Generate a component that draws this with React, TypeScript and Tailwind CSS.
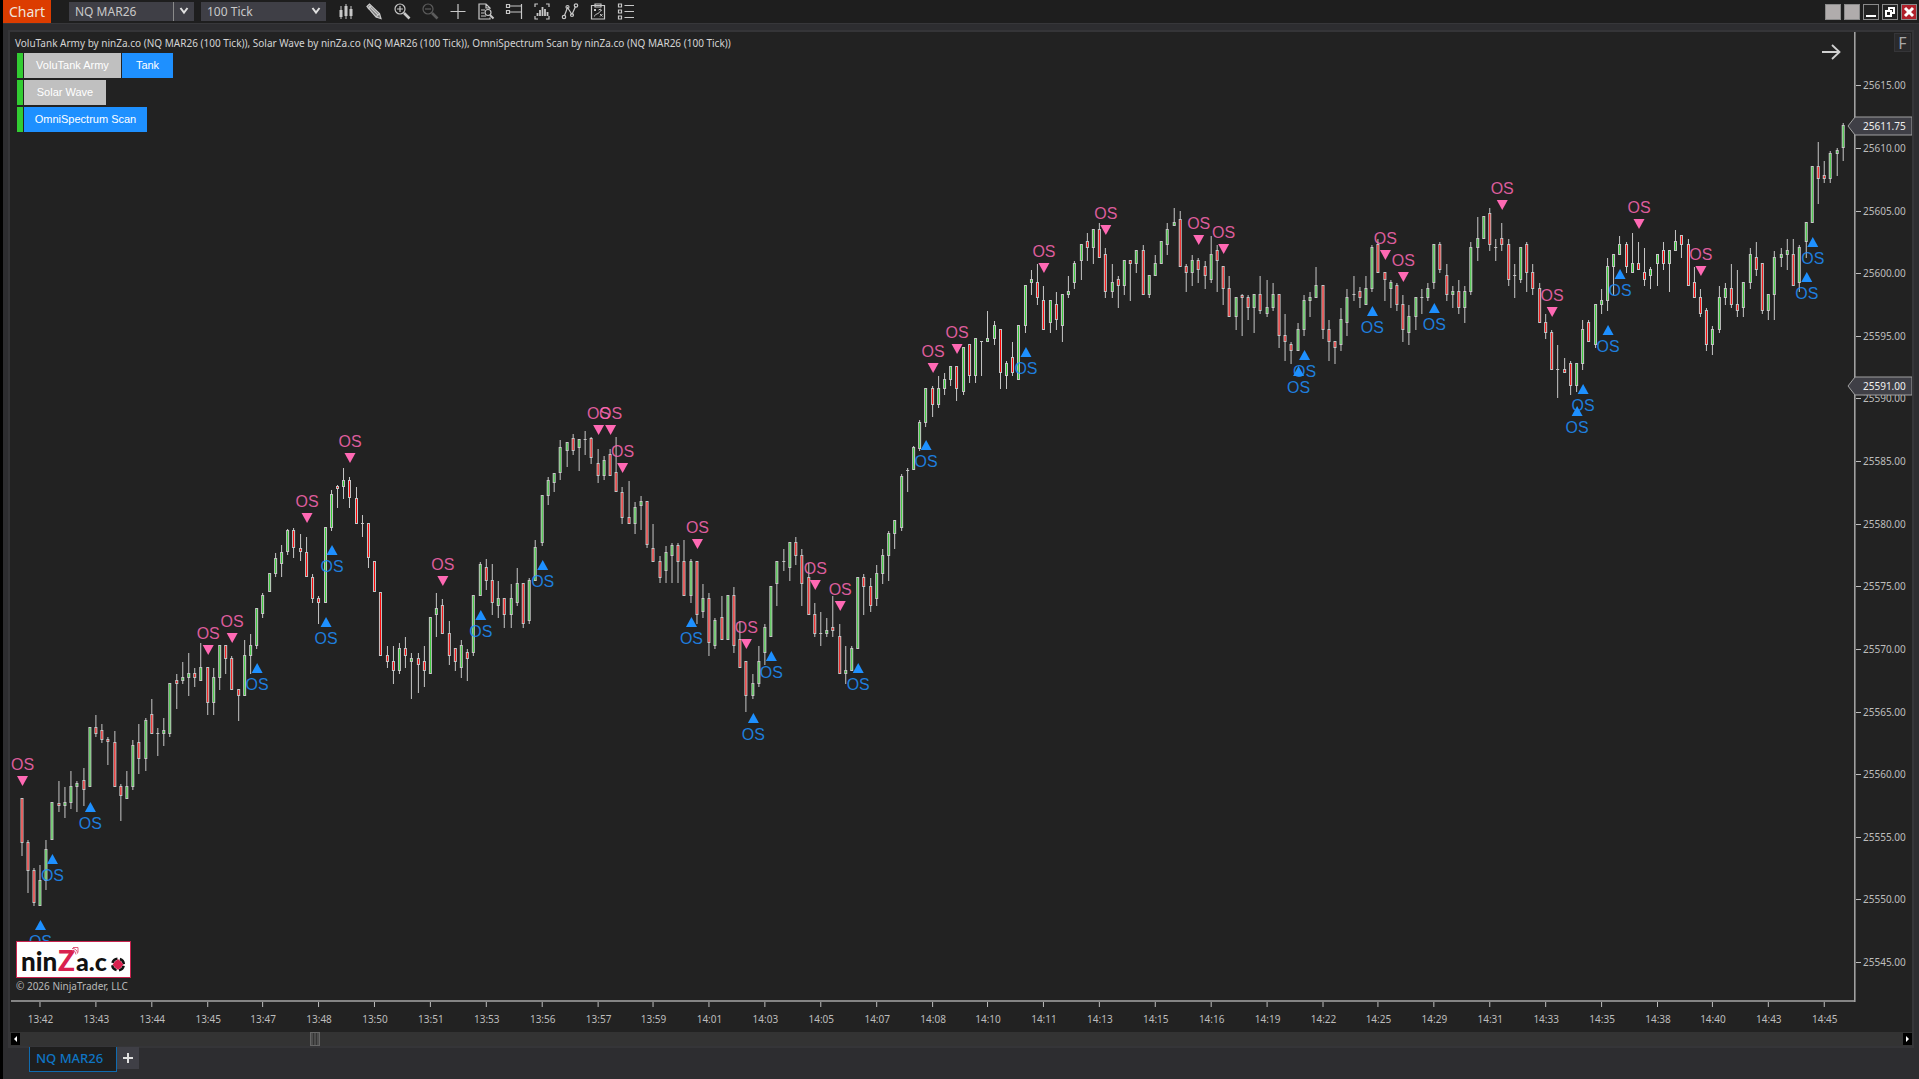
import { useState } from 'react'
import type { ReactNode } from 'react'

type Bar = [number, number, number, number]

// Bars are [high, body top, body bottom, low] in thirds of a pixel below `top`.
// A negative high marks a falling bar.
const segments: { top: number; bars: Bar[] }[] = [
  {
    top: 560,
    bars: [
      [-715, 715, 849, 887], [-841, 847, 933, 999], [-925, 931, 1029, 1038], [916, 961, 1038, 1038], [841, 868, 963, 991],
      [727, 727, 839, 839], [-663, 729, 738, 755], [682, 727, 738, 773], [633, 679, 728, 746], [664, 670, 680, 755],
      [-625, 661, 689, 738], [502, 502, 681, 681], [-465, 502, 521, 530], [-492, 511, 539, 548], [-532, 538, 547, 614],
      [-514, 547, 681, 681], [-673, 679, 707, 782], [633, 679, 716, 716], [541, 555, 681, 690], [-492, 547, 597, 641],
      [475, 481, 597, 632], [-417, 462, 521, 521], [-505, 519, 522, 587], [475, 511, 521, 557], [369, 369, 521, 530],
      [-342, 361, 371, 446], [306, 352, 362, 371], [279, 340, 353, 407], [-325, 340, 353, 380], [249, 322, 362, 362],
      [-322, 322, 429, 464], [325, 352, 429, 464], [255, 255, 353, 390], [-255, 255, 297, 341], [-288, 294, 389, 389],
      [-388, 388, 407, 482], [240, 286, 407, 407], [222, 256, 288, 341], [144, 144, 258, 267], [99, 105, 163, 173],
      [39, 39, 97, 97],
    ],
  },
  {
    top: 420,
    bars: [
      [399, 414, 461, 472], [376, 396, 433, 472], [328, 329, 397, 406], [-323, 330, 385, 415], [-341, 384, 397, 424],
      [-350, 395, 472, 472], [-462, 471, 536, 548], [-527, 534, 548, 611], [320, 320, 548, 548], [209, 223, 323, 332],
      [-196, 197, 208, 265], [143, 179, 200, 236], [-170, 179, 235, 265], [-200, 233, 311, 311], [-284, 309, 312, 350],
      [-308, 308, 415, 443], [-423, 423, 517, 517], [-516, 516, 707, 707], [-677, 704, 725, 743], [-678, 723, 752, 791],
      [669, 684, 752, 762], [-651, 684, 707, 743], [699, 713, 725, 836], [-699, 714, 735, 818], [-678, 723, 752, 800],
      [591, 591, 762, 762], [518, 563, 584, 650], [-537, 555, 641, 641], [-602, 639, 707, 734], [-684, 684, 725, 753],
      [660, 675, 743, 773], [-687, 695, 716, 782], [524, 524, 698, 707], [426, 431, 527, 527], [-416, 440, 482, 509],
      [-433, 479, 548, 584], [482, 534, 557, 593], [-534, 534, 584, 623], [491, 534, 584, 623], [443, 489, 548, 557],
      [-489, 489, 611, 623], [473, 479, 602, 611], [359, 382, 482, 482], [224, 224, 368, 377], [170, 179, 227, 256],
      [158, 158, 190, 216], [59, 82, 160, 181], [65, 66, 94, 142], [-41, 55, 94, 106], [56, 56, 85, 152],
      [-32, 57, 60, 106], [-50, 55, 115, 132], [-86, 130, 169, 190], [107, 121, 169, 181], [-86, 103, 169, 169],
      [-50, 157, 217, 217],
    ],
  },
  {
    top: 390,
    bars: [
      [-290, 305, 383, 401], [-272, 380, 401, 401], [335, 352, 401, 431], [317, 332, 347, 421], [-332, 332, 466, 475],
      [-401, 474, 515, 515], [-498, 513, 563, 580], [467, 486, 542, 580], [459, 464, 497, 580], [-459, 464, 515, 580],
      [-450, 513, 617, 617], [507, 513, 617, 638], [-513, 513, 674, 701], [581, 624, 665, 683], [-608, 624, 758, 797],
      [684, 690, 767, 776], [-618, 682, 749, 749], [615, 615, 749, 749], [-591, 615, 767, 788], [-693, 747, 833, 833],
      [-813, 813, 917, 965], [852, 879, 917, 926], [768, 813, 881, 890], [702, 711, 788, 824], [588, 588, 740, 740],
      [513, 513, 581, 647], [-476, 513, 516, 542], [455, 455, 533, 572], [-440, 456, 497, 524], [-476, 494, 581, 647],
      [-518, 561, 674, 674], [-639, 672, 732, 740], [-666, 730, 733, 767], [684, 720, 732, 740], [-618, 711, 722, 740],
      [-702, 738, 851, 851], [768, 840, 851, 881], [768, 773, 842, 842], [560, 560, 776, 776], [-552, 560, 590, 674],
      [-563, 588, 647, 665], [524, 549, 627, 647], [476, 494, 551, 581], [422, 428, 497, 572], [389, 389, 431, 476],
      [251, 257, 413, 422], [-234, 239, 242, 307], [167, 172, 241, 241],
    ],
  },
  {
    top: 200,
    bars: [
      [661, 667, 746, 752], [565, 565, 670, 680], [-559, 565, 615, 652], [528, 565, 615, 625], [520, 538, 568, 586],
      [499, 499, 541, 559], [-499, 499, 568, 604], [442, 442, 577, 586], [-433, 433, 528, 550], [415, 415, 528, 550],
      [-424, 424, 427, 529], [334, 415, 426, 426], [362, 376, 416, 435], [-388, 388, 519, 568], [484, 489, 528, 568],
      [-427, 472, 519, 529], [376, 376, 541, 541], [256, 256, 378, 400], [210, 238, 248, 285], [-193, 247, 294, 315],
      [-259, 301, 389, 389], [300, 301, 369, 400], [-277, 313, 360, 390], [283, 283, 378, 427], [229, 274, 285, 294],
      [184, 190, 249, 267], [133, 133, 182, 240], [-99, 124, 143, 182], [88, 88, 143, 192], [-69, 88, 173, 173],
      [-144, 163, 276, 294], [193, 247, 276, 294], [-229, 238, 258, 324], [181, 181, 258, 285], [-181, 181, 192, 303],
      [151, 151, 192, 219], [-136, 151, 285, 285], [226, 226, 285, 294], [166, 190, 228, 228], [124, 124, 192, 192],
      [70, 88, 135, 165], [25, 67, 77, 77], [-34, 58, 201, 201], [-193, 199, 219, 276], [166, 181, 219, 258],
    ],
  },
  {
    top: 190,
    bars: [
      [-205, 211, 240, 279], [-214, 229, 258, 297], [139, 193, 270, 279], [-166, 181, 213, 306], [-229, 229, 297, 346],
      [-259, 295, 381, 381], [322, 322, 381, 420], [-313, 314, 323, 438], [-316, 322, 353, 390], [313, 313, 353, 430],
      [-259, 313, 363, 372], [271, 352, 372, 381], [280, 313, 354, 363], [-313, 313, 438, 474], [-373, 436, 457, 514],
      [-457, 462, 483, 522], [400, 418, 483, 483], [316, 331, 420, 438], [307, 322, 332, 381], [232, 286, 324, 324],
      [-286, 286, 420, 447], [-391, 418, 456, 514], [-454, 454, 474, 522], [355, 388, 465, 483], [298, 322, 399, 438],
      [-259, 313, 316, 333], [-290, 303, 323, 354], [259, 295, 346, 346], [166, 172, 297, 306], [-148, 163, 249, 249],
      [-247, 247, 270, 333], [271, 277, 297, 354], [-280, 286, 346, 363], [-316, 343, 420, 456], [346, 379, 430, 465],
      [322, 322, 381, 420], [-298, 322, 325, 372], [280, 295, 324, 333], [163, 163, 279, 297], [-157, 163, 240, 249],
      [-223, 256, 315, 333], [289, 304, 315, 354], [-271, 304, 354, 372], [289, 304, 354, 399], [157, 172, 306, 315],
      [82, 145, 173, 213], [79, 79, 147, 147], [-55, 70, 165, 182], [-148, 172, 175, 213], [-100, 145, 165, 182],
      [-148, 163, 270, 288], [-222, 256, 259, 324],
    ],
  },
  {
    top: 0,
    bars: [
      [741, 741, 839, 849], [-727, 733, 819, 876], [-793, 817, 867, 885], [-849, 865, 969, 969], [-943, 967, 999, 1017],
      [-991, 997, 1110, 1110], [-1036, 1107, 1110, 1194], [-1075, 1108, 1119, 1119], [-1084, 1090, 1158, 1185], [1090, 1090, 1158, 1176],
      [961, 988, 1092, 1110], [-961, 967, 1026, 1026], [913, 913, 1035, 1044], [868, 901, 914, 942], [774, 799, 903, 933],
      [763, 763, 801, 886], [709, 732, 765, 765], [-727, 733, 801, 819], [699, 790, 818, 818], [-727, 790, 810, 810],
      [-745, 817, 840, 858], [802, 808, 828, 867], [763, 763, 792, 858], [-727, 751, 792, 810], [751, 751, 792, 876],
      [690, 724, 752, 752], [-706, 706, 735, 774], [-717, 732, 858, 858], [-801, 847, 894, 894], [-867, 892, 942, 951],
      [-925, 930, 1035, 1053], [979, 988, 1035, 1065], [858, 892, 990, 999], [850, 865, 893, 915], [-793, 865, 915, 924],
      [-810, 913, 933, 951], [847, 847, 924, 951], [745, 763, 849, 867], [-727, 771, 809, 828], [-790, 790, 933, 942],
      [883, 883, 933, 960], [754, 771, 885, 960], [745, 763, 774, 801], [717, 751, 764, 810], [-717, 763, 858, 858],
      [736, 741, 849, 876], [667, 667, 726, 774], [499, 499, 668, 668], [-427, 498, 536, 612], [-483, 525, 536, 548],
      [454, 460, 536, 548], [444, 450, 461, 528], [370, 375, 443, 483],
    ],
  },
]

// [bar index, y of the triangle's upper edge]
const sellSignals = [
  [0, 776], [30, 645], [34, 633], [46, 513], [53, 453], [68, 576], [93, 425], [95, 425], [97, 463], [109, 539],
  [117, 639], [128, 580], [132, 601], [147, 363], [151, 344], [165, 263], [175, 225], [190, 235], [194, 244],
  [220, 250], [223, 272], [239, 200], [247, 307], [261, 219], [271, 266],
]
const buySignals = [
  [3, 920], [5, 854], [11, 802], [38, 663], [49, 617], [50, 545], [74, 610], [84, 560], [108, 617], [118, 713],
  [121, 651], [135, 663], [146, 440], [162, 347], [206, 366], [207, 350], [218, 306], [228, 303], [251, 406],
  [252, 384], [256, 325], [258, 269], [288, 272], [289, 237],
]

const times = [
  '13:42', '13:43', '13:44', '13:45', '13:47', '13:48', '13:50', '13:51', '13:53', '13:56', '13:57',
  '13:59', '14:01', '14:03', '14:05', '14:07', '14:08', '14:10', '14:11', '14:13', '14:15', '14:16',
  '14:19', '14:22', '14:25', '14:29', '14:31', '14:33', '14:35', '14:38', '14:40', '14:43', '14:45',
]

const barX = (i: number) => Math.max(Math.floor(20.97 + 6.205 * i), 21) * 0.99847 + 0.535

const priceY = (price: number) => 85.3 + (25615 - price) * 12.526

const candles = segments.flatMap(({ top, bars }) =>
  bars.map(([high, open, close, low]) => ({
    up: high > 0,
    high: top + Math.round(Math.abs(high) / 3),
    top: top + Math.round(open / 3),
    bottom: top + Math.round(close / 3),
    low: top + Math.round(low / 3),
  })),
)

function Candles() {
  return (
    <g>
      {candles.map((c, i) => {
        const x = barX(i)
        const height = Math.max(c.bottom - c.top, 1)
        return (
          <g key={i}>
            <rect x={x} y={c.high} width={1} height={Math.max(c.low - c.high, 1)} fill="#c6c6c6" />
            <rect x={x - 1} y={c.top} width={3} height={height} fill="#c6c6c6" />
            {height > 2 && (
              <rect x={x} y={c.top + 1} width={1} height={height - 2} fill={c.up ? '#32cd32' : '#ff0000'} />
            )}
          </g>
        )
      })}
    </g>
  )
}

function Signals() {
  return (
    <g fontFamily="'Liberation Sans', sans-serif" fontSize={16} textAnchor="middle">
      {sellSignals.map(([i, y]) => {
        const x = barX(i) + 1
        return (
          <g key={i} fill="#ff69b4">
            <path d={`M${x - 5.500} ${y}h11l-5.500 10z`} />
            <text x={x} y={y - 6} fillOpacity={0.85}>OS</text>
          </g>
        )
      })}
      {buySignals.map(([i, y]) => {
        const x = barX(i) + 1
        return (
          <g key={i} fill="#1e90ff">
            <path d={`M${x - 5.500} ${y + 10}h11l-5.500 -10z`} />
            <text x={x} y={y + 27} fillOpacity={0.85}>OS</text>
          </g>
        )
      })}
    </g>
  )
}

function PriceTag({ price }: { price: number }) {
  const y = Math.round(priceY(price))
  return (
    <g>
      <path d={`M1848 ${y}l7 -9h57v18h-57z`} fill="#3f3f46" stroke="#a0a0a0" />
      <text x={1863} y={y + 4} fill="#f0f0f0">{price.toFixed(2)}</text>
    </g>
  )
}

function PriceChart() {
  const prices = Array.from({ length: 15 }, (_, i) => 25615 - i * 5)
  return (
    <svg
      viewBox="10 32 1902 1000"
      className="block h-auto w-full"
      fontFamily="'Noto Sans', sans-serif"
      fontSize={10}
      role="img"
      aria-label="NQ MAR26 100 tick chart"
    >
      <Candles />
      <Signals />
      <rect x={11} y={1000} width={1845} height={2} fill="#858585" />
      <rect x={1854} y={31} width={1} height={971} fill="#a0a0a0" />
      <rect x={1855} y={31} width={1} height={971} fill="#6c6c6c" />
      {times.map((time, i) => {
        const x = barX(3 + i * 9)
        return (
          <g key={time} fill="#bdbdbd">
            <rect x={x} y={1002} width={1} height={5} />
            <text x={x + 1} y={1023} textAnchor="middle">{time}</text>
          </g>
        )
      })}
      {prices.map((price) => {
        const y = Math.round(priceY(price))
        return (
          <g key={price} fill="#bdbdbd">
            <rect x={1856} y={y} width={5} height={1} />
            <text x={1863} y={y + 4}>{price.toFixed(2)}</text>
          </g>
        )
      })}
      <PriceTag price={25611.75} />
      <PriceTag price={25591} />
      <path d="M1822 52h17M1832 45l7.500 7l-7.500 7" fill="none" stroke="#d0d0d0" strokeWidth={1.8} />
    </svg>
  )
}

const icons: { name: string; dim?: boolean; art: ReactNode }[] = [
  {
    name: 'Chart style',
    art: (
      <>
        <path d="M4 4v13M9 2v15M14 4v13" strokeWidth={1} />
        <path d="M4 8v7M9 4v10M14 7v7" strokeWidth={3} />
      </>
    ),
  },
  {
    name: 'Drawing tools',
    art: (
      <>
        <path d="M2 4.500L4.500 2L14.500 11.500L16 16.500L11 15Z" fill="#777" />
        <path d="M4 4l9 9M3 7L6 4M11 15L14.500 11.500" />
      </>
    ),
  },
  {
    name: 'Zoom in',
    art: (
      <>
        <circle cx={7} cy={7} r={5} />
        <path d="M4 7h6M7 4v6" />
        <path d="M11 11l5.500 5.500" strokeWidth={2.6} />
      </>
    ),
  },
  {
    name: 'Zoom out',
    dim: true,
    art: (
      <>
        <circle cx={7} cy={7} r={5} />
        <path d="M4 7h6" />
        <path d="M11 11l5.500 5.500" strokeWidth={2.6} />
      </>
    ),
  },
  { name: 'Crosshair', art: <path d="M9 2v15M1.500 9.500h15" /> },
  {
    name: 'Data box',
    art: (
      <>
        <path d="M13 15.500V17H2V2h7l4 4v1M9 2v4h4M4 8h4M4 11h3M4 14h5" />
        <circle cx={11} cy={10.500} r={3} />
        <path d="M13 13l3.500 3.500" strokeWidth={2} />
      </>
    ),
  },
  {
    name: 'Chart trader',
    art: <path d="M1.500 2.500h3v3h-3zM1.500 8.500h3v3h-3zM5 4h11.500M5 10h11.500M16.500 2v15" />,
  },
  {
    name: 'Indicators',
    art: (
      <>
        <path d="M5 2H2v3M13 2h3v3M5 17H2v-3M13 17h3v-3" />
        <path d="M4.500 14v-3M7 14v-6M9.500 14V5M12 14V7M14.500 14v-4" strokeWidth={1.8} />
      </>
    ),
  },
  {
    name: 'Strategies',
    art: (
      <>
        <path d="M3.500 13.500L6.500 5.500L11 12.500L14.500 4.500" />
        <circle cx={3} cy={15} r={1.700} />
        <circle cx={6.500} cy={5} r={1.500} />
        <circle cx={11} cy={13} r={1.500} />
        <circle cx={15} cy={3.500} r={1.700} />
      </>
    ),
  },
  {
    name: 'Strategy performance',
    art: (
      <>
        <path d="M2.500 3.500h13v13.500h-13zM6 2h6v3H6z" />
        <path d="M5 7l2 2M7 7l-2 2M11 12l2.500 2.500M13.500 12L11 14.500M5.500 14.500c0-3 5-2 6-6M9.500 8l2-1l1 2" strokeWidth={1} />
      </>
    ),
  },
  {
    name: 'Properties',
    art: <path d="M1.500 2h3v3h-3zM1.500 8h3v3h-3zM1.500 14h3v3h-3zM7.500 3.500h9.500M7.500 9.500h9.500M7.500 15.500h9.500" />,
  },
]

function Chevron() {
  return (
    <svg viewBox="0 0 10 10" className="pointer-events-none absolute right-[5px] top-1 size-[10px]" aria-hidden="true">
      <path d="M1.500 2l3.500 4.500L8.500 2" fill="none" stroke="#e0e0e0" strokeWidth={2} />
    </svg>
  )
}

function Toolbar() {
  const windowButton = 'flex size-4 items-center justify-center border border-[#8a8a8a]'
  return (
    <header className="flex h-[24px] items-start border-b border-[#37373a] bg-[#1e1e1e] pr-[2px]">
      <h1 className="flex h-[23px] w-12 items-center justify-center bg-[#dc3c00] text-sm text-[#f0e4dc]">Chart</h1>
      <div className="relative ml-[18px] mt-[2px] bg-[#3f3f46]">
        <select
          aria-label="Instrument"
          className="block h-[19px] w-[125px] appearance-none bg-transparent pl-[6px] text-xs text-[#c8c8c8]"
        >
          <option>NQ MAR26</option>
        </select>
        <span className="pointer-events-none absolute right-5 top-0 h-full w-px bg-[#8a8a8a]" />
        <Chevron />
      </div>
      <div className="relative ml-[7px] mt-[2px] bg-[#3f3f46]">
        <select
          aria-label="Interval"
          className="block h-[19px] w-[125px] appearance-none bg-transparent pl-[6px] text-xs text-[#c8c8c8]"
        >
          <option>100 Tick</option>
        </select>
        <Chevron />
      </div>
      <nav className="ml-[11px] mt-[2px] flex gap-[10px]">
        {icons.map(({ name, dim, art }) => (
          <button key={name} type="button" aria-label={name} className={dim ? 'text-[#5c5c5c]' : 'text-[#c8c8c8]'}>
            <svg viewBox="0 0 18 18" className="size-[18px]" fill="none" stroke="currentColor" strokeWidth={1.2}>
              {art}
            </svg>
          </button>
        ))}
      </nav>
      <div className="ml-auto mt-1 flex gap-[3px]">
        <button type="button" aria-label="Link instrument" className={`${windowButton} bg-[#b0acac]`} />
        <button type="button" aria-label="Link interval" className={`${windowButton} bg-[#b0acac]`} />
        <button type="button" aria-label="Minimize" className={`${windowButton} bg-[#222]`}>
          <span className="mt-[7px] h-[2px] w-[10px] bg-white" />
        </button>
        <button type="button" aria-label="Restore" className={`${windowButton} bg-[#222]`}>
          <svg viewBox="0 0 14 14" className="size-[14px]" fill="none" stroke="#fff" strokeWidth={2}>
            <path d="M6 5V3h5v5H9M3 6h5v5H3z" />
          </svg>
        </button>
        <button type="button" aria-label="Close" className={`${windowButton} bg-[#b0202a]`}>
          <svg viewBox="0 0 14 14" className="size-[14px]" fill="none" stroke="#fff" strokeWidth={3}>
            <path d="M3 3l8 8M11 3l-8 8" />
          </svg>
        </button>
      </div>
    </header>
  )
}

function Indicator({ children }: { children: ReactNode }) {
  return <div className="flex h-[25px] gap-px border-l-[6px] border-[#32cd32] pl-px">{children}</div>
}

function IndicatorPanel() {
  const base = 'text-[11px] text-white font-["Liberation_Sans",sans-serif]'
  return (
    <div className="absolute left-[7px] top-[21px] flex flex-col items-start gap-[2px]">
      <Indicator>
        <button type="button" className={`${base} w-[97px] bg-[#c0c0c0]`}>VoluTank Army</button>
        <button type="button" className={`${base} w-[51px] bg-[#1e90ff]`}>Tank</button>
      </Indicator>
      <Indicator>
        <button type="button" className={`${base} w-[82px] bg-[#c0c0c0]`}>Solar Wave</button>
      </Indicator>
      <Indicator>
        <button type="button" className={`${base} w-[123px] bg-[#1e90ff]`}>OmniSpectrum Scan</button>
      </Indicator>
    </div>
  )
}

function Logo() {
  return (
    <svg viewBox="0 0 115 37" className="block h-[37px] w-[115px]" role="img" aria-label="ninZa.co">
      <rect x={0.5} y={0.5} width={114} height={36} fill="#fff" stroke="#c8244f" />
      <g fontFamily="Lato, sans-serif" fontWeight={900} fill="#111">
        <text x={5} y={30} fontSize={26}>nin</text>
        <text x={42} y={30} fontSize={28} fill="#d9214f">Z</text>
        <text x={60} y={30} fontSize={25}>a.c</text>
      </g>
      <g fill="none" stroke="#e05a7c">
        <path d="M56 9.500a4 4 0 0 1 4 4M56 7.500a5 5 0 0 1 5.500 5M57 6.500h5v5" />
      </g>
      <circle cx={102} cy={23.500} r={5.800} fill="none" stroke="#111" strokeWidth={2.500} strokeDasharray="6.600 2.510" strokeDashoffset={-1.250} />
      <path d="M102 18l5.500 5.500l-5.500 5.500l-5.500 -5.500z" fill="#d9214f" />
      <circle cx={102} cy={23.500} r={4} fill="#d9214f" />
    </svg>
  )
}

export default function App() {
  const [scroll, setScroll] = useState(155)

  return (
    <main className='flex min-h-screen flex-col border-l-[3px] border-black bg-[#2d2d30] font-["Noto_Sans",sans-serif]'>
      <Toolbar />

      <section className="ml-[5px] mr-[5px] mt-[6px] border-2 border-[#353538] bg-[#222]">
        <div className="relative">
          <PriceChart />
          <p className="absolute left-[5px] top-[2px] whitespace-nowrap text-[10px] leading-[18px] text-[#d4d4d4]">
            VoluTank Army by ninZa.co (NQ MAR26 (100 Tick)), Solar Wave by ninZa.co (NQ MAR26 (100 Tick)), OmniSpectrum
            Scan by ninZa.co (NQ MAR26 (100 Tick))
          </p>
          <IndicatorPanel />
          <button
            type="button"
            className="absolute right-[1px] top-[1px] h-[19px] w-[17px] border border-[#353538] bg-[#2a2a2c] text-base leading-4 text-[#a8a8a8]"
          >
            F
          </button>
          <div className="absolute bottom-[38px] left-[6px]">
            <Logo />
            <p className="text-[10px] leading-4 text-[#b8b8b8]">© 2026 NinjaTrader, LLC</p>
          </div>
        </div>
        <div className="flex h-[14px] items-center bg-[#333]">
          <button type="button" aria-label="Scroll left" className="ml-px h-3 w-[9px] bg-black">
            <svg viewBox="0 0 9 12" className="h-3 w-[9px]">
              <path d="M6 3v6L3 6z" fill="#fff" />
            </svg>
          </button>
          <input
            type="range"
            aria-label="Scroll chart"
            min={0}
            max={1000}
            value={scroll}
            onChange={(e) => setScroll(Number(e.target.value))}
            className="h-[14px] min-w-0 flex-1 appearance-none bg-transparent [&::-webkit-slider-thumb]:h-[14px] [&::-webkit-slider-thumb]:w-[10px] [&::-webkit-slider-thumb]:appearance-none [&::-webkit-slider-thumb]:border [&::-webkit-slider-thumb]:border-[#666] [&::-webkit-slider-thumb]:bg-[repeating-linear-gradient(90deg,#4c4c4c_0_2px,#333_2px_3px)]"
          />
          <button type="button" aria-label="Scroll right" className="h-3 w-[9px] bg-black">
            <svg viewBox="0 0 9 12" className="h-3 w-[9px]">
              <path d="M3 3v6l3-3z" fill="#fff" />
            </svg>
          </button>
        </div>
      </section>

      <footer className="relative -mt-px ml-[26px] flex items-start">
        <a
          href="#nq-mar26"
          className="flex h-[25px] w-[88px] items-center border border-t-0 border-[#0f6bb0] bg-[#1e1e1e] pl-[6px] text-[13px] font-medium text-[#0f75c4]"
        >
          NQ MAR26
        </a>
        <button type="button" aria-label="Add tab" className="flex h-[22px] w-[22px] items-center justify-center bg-[#3f3f46]">
          <svg viewBox="0 0 12 12" className="size-3">
            <path d="M6 1v10M1 6h10" stroke="#e0e0e0" strokeWidth={2} />
          </svg>
        </button>
      </footer>
    </main>
  )
}
